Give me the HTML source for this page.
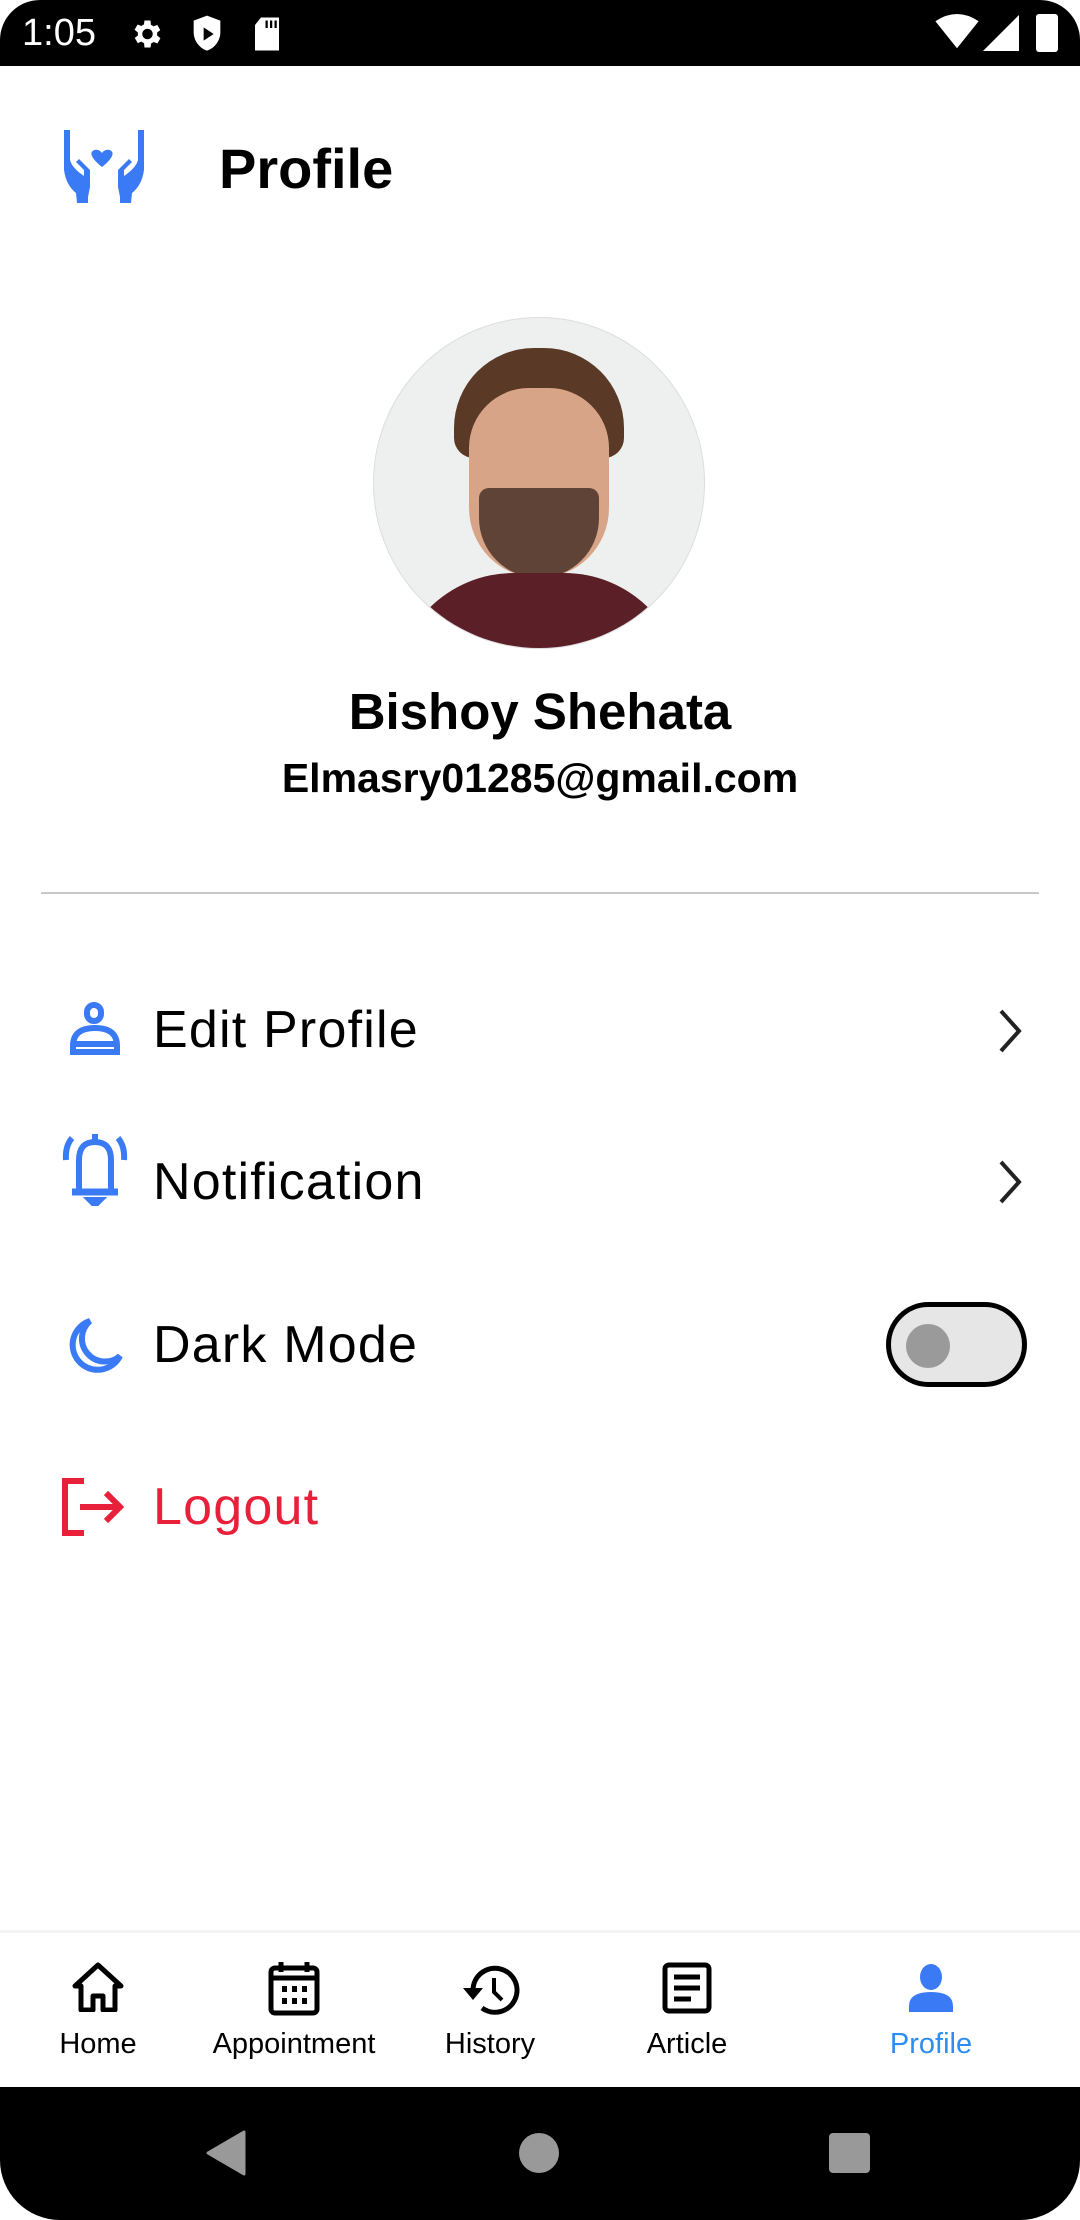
<!DOCTYPE html>
<html><head><meta charset="utf-8"><style>
*{margin:0;padding:0;box-sizing:border-box}
body{width:1080px;height:2220px;background:#fff;font-family:"Liberation Sans",Roboto,sans-serif;position:relative;overflow:hidden;color:#000}
.abs{position:absolute}
.item{position:absolute;left:153px;font-size:52px;line-height:60px;letter-spacing:1.2px}
.nl{position:absolute;top:2028px;font-size:29px;width:200px;text-align:center}
</style></head><body>
<div class="abs" style="left:0;top:0;width:1080px;height:66px;background:#000;border-radius:40px 40px 0 0"></div>
<div class="abs" style="left:22px;top:10px;color:#fff;font-size:38px;line-height:46px">1:05</div>
<svg class="abs" style="left:128px;top:16px" width="36" height="36" viewBox="0 0 24 24"><path fill="#fff" d="M19.4 13a7.5 7.5 0 000-2l2.1-1.6-2-3.5-2.5 1a7 7 0 00-1.7-1L15 3h-4l-.4 2.7a7 7 0 00-1.7 1l-2.5-1-2 3.5L6.6 11a7.5 7.5 0 000 2l-2.1 1.6 2 3.5 2.5-1a7 7 0 001.7 1L11 21h4l.4-2.7a7 7 0 001.7-1l2.5 1 2-3.5zM13 15.5a3.5 3.5 0 110-7 3.5 3.5 0 010 7z"/></svg>
<svg class="abs" style="left:190px;top:14px" width="34" height="40" viewBox="0 0 20 24"><path fill="#fff" d="M10 1L2 4v7c0 5 3.5 9.5 8 11 4.5-1.5 8-6 8-11V4z"/><path fill="#000" d="M8 8v8l6-4z"/></svg>
<svg class="abs" style="left:252px;top:16px" width="30" height="36" viewBox="0 0 20 24"><path fill="#fff" d="M6 1h12v22H2V6z"/><path fill="#000" d="M9 3h1.5v5H9zM12 3h1.5v5H12zM15 3h1.5v5H15z"/></svg>
<svg class="abs" style="left:935px;top:14px" width="44" height="36" viewBox="0 0 24 20"><path fill="#fff" d="M0 4Q12-4 24 4L12 19z"/></svg>
<svg class="abs" style="left:983px;top:14px" width="36" height="38" viewBox="0 0 20 20"><path fill="#fff" d="M20 0v20H0z"/></svg>
<div class="abs" style="left:1036px;top:14px;width:22px;height:38px;background:#fff;border-radius:3px"></div>

<svg class="abs" style="left:62px;top:130px" width="84" height="84" viewBox="0 0 84 84"><g fill="#3a7bf5"><path d="M30 26c-3-6 6-9 10-3 4-6 13-3 10 3-2 5-10 11-10 11s-8-6-10-11z"/><path d="M4 0h4v30q2 8 14 16V40l-8-8 3-3 11 11v17l-2 10v6H15l-1-10Q4 55 2 40V0z"/><path d="M80 0h-4v30q-2 8-14 16V40l8-8-3-3-11 11v17l2 10v6h11l1-10q10-8 12-23V0z"/></g></svg>
<div class="abs" style="left:219px;top:136px;font-size:56px;font-weight:bold">Profile</div>

<div class="abs" style="left:373px;top:317px;width:332px;height:332px;border-radius:50%;background:#eef0f0;overflow:hidden;border:1px solid #ddd">
<div class="abs" style="left:80px;top:30px;width:170px;height:110px;background:#5a3a26;border-radius:80px 80px 20px 20px"></div>
<div class="abs" style="left:95px;top:70px;width:140px;height:190px;background:#d8a487;border-radius:60px 60px 70px 70px"></div>
<div class="abs" style="left:105px;top:170px;width:120px;height:90px;background:#4a3328;border-radius:10px 10px 60px 60px;opacity:.85"></div>
<div class="abs" style="left:20px;top:255px;width:290px;height:120px;background:#5a1f27;border-radius:120px 120px 0 0"></div>
</div>
<div class="abs" style="left:0;top:682px;width:1080px;text-align:center;font-size:51px;font-weight:bold">Bishoy Shehata</div>
<div class="abs" style="left:0;top:755px;width:1080px;text-align:center;font-size:41px;font-weight:bold">Elmasry01285@gmail.com</div>
<div class="abs" style="left:41px;top:892px;width:998px;height:2px;background:#c8c8c8"></div>

<svg class="abs" style="left:68px;top:1002px" width="54" height="54" viewBox="0 0 54 54" fill="none" stroke="#3a7bf5" stroke-width="6"><rect x="19" y="3" width="14" height="16" rx="7"/><path d="M5 50V44Q5 26 27 26Q49 26 49 44V50z"/><path d="M5 42h44"/></svg>
<div class="item" style="top:1000px">Edit Profile</div>
<svg class="abs" style="left:996px;top:1008px" width="30" height="46" viewBox="0 0 30 46"><path d="M5 3l18 20-18 20" fill="none" stroke="#222" stroke-width="4"/></svg>

<svg class="abs" style="left:62px;top:1130px" width="66" height="76" viewBox="0 0 66 76" fill="none" stroke="#3a7bf5" stroke-width="6"><path d="M17 60V30q0-18 16-18t16 18v30"/><path d="M10 62h46" stroke-width="7"/><path d="M33 4v6"/><path d="M10 8q-7 8-6 22M56 8q7 8 6 22"/><path d="M28 70h10l-5 5z" fill="#3a7bf5"/></svg>
<div class="item" style="top:1152px">Notification</div>
<svg class="abs" style="left:996px;top:1159px" width="30" height="46" viewBox="0 0 30 46"><path d="M5 3l18 20-18 20" fill="none" stroke="#222" stroke-width="4"/></svg>

<svg class="abs" style="left:66px;top:1318px" width="62" height="56" viewBox="0 0 62 56"><path d="M24 3A25 25 0 1054 38 22 22 0 0124 3z" fill="none" stroke="#3a7bf5" stroke-width="6"/></svg>
<div class="item" style="top:1315px">Dark Mode</div>
<div class="abs" style="left:886px;top:1302px;width:141px;height:85px;border:5px solid #000;border-radius:43px;background:#e6e6e6"></div>
<div class="abs" style="left:906px;top:1324px;width:44px;height:44px;border-radius:50%;background:#9a9a9a"></div>

<svg class="abs" style="left:62px;top:1478px" width="66" height="58" viewBox="0 0 66 58" fill="none" stroke="#e8203a" stroke-width="6"><path d="M22 3H3v52h19"/><path d="M18 29h40M44 15l14 14-14 14"/></svg>
<div class="item" style="top:1477px;color:#e8203a">Logout</div>

<div class="abs" style="left:0;top:1930px;width:1080px;height:3px;background:#f2f2f2"></div>
<svg class="abs" style="left:72px;top:1962px" width="52" height="50" viewBox="0 0 52 50"><path d="M26 3L3 24h6v24h12V34h10v14h12V24h6z" fill="none" stroke="#000" stroke-width="5" stroke-linejoin="round"/></svg>
<div class="nl" style="left:-2px">Home</div>
<svg class="abs" style="left:268px;top:1960px" width="52" height="56" viewBox="0 0 52 56"><rect x="3" y="8" width="46" height="45" rx="4" fill="none" stroke="#000" stroke-width="5"/><path d="M13 2v10M39 2v10M3 18h46" stroke="#000" stroke-width="5"/><g fill="#000"><rect x="14" y="26" width="5" height="6"/><rect x="24" y="26" width="5" height="6"/><rect x="34" y="26" width="5" height="6"/><rect x="14" y="38" width="5" height="6"/><rect x="24" y="38" width="5" height="6"/><rect x="34" y="38" width="5" height="6"/></g></svg>
<div class="nl" style="left:194px">Appointment</div>
<svg class="abs" style="left:460px;top:1962px" width="60" height="56" viewBox="0 0 60 56"><path d="M13 28A22 22 0 1 1 22 46" fill="none" stroke="#000" stroke-width="5"/><path d="M3 26h20L13 38z" fill="#000"/><path d="M34 16v14l8 8" fill="none" stroke="#000" stroke-width="4"/></svg>
<div class="nl" style="left:390px">History</div>
<svg class="abs" style="left:662px;top:1962px" width="50" height="52" viewBox="0 0 50 52"><rect x="3" y="3" width="44" height="46" rx="4" fill="none" stroke="#000" stroke-width="5"/><path d="M12 15h26M12 26h26M12 37h17" stroke="#000" stroke-width="5"/></svg>
<div class="nl" style="left:587px">Article</div>
<svg class="abs" style="left:908px;top:1964px" width="46" height="48" viewBox="0 0 46 48"><ellipse cx="23" cy="13" rx="11" ry="13" fill="#3a7bf5"/><path d="M1 48V42Q1 28 23 28Q45 28 45 42V48z" fill="#3a7bf5"/></svg>
<div class="nl" style="left:831px;color:#2f8cf0">Profile</div>

<div class="abs" style="left:0;top:2087px;width:1080px;height:133px;background:#000;border-radius:0 0 60px 60px"></div>
<svg class="abs" style="left:204px;top:2130px" width="42" height="46" viewBox="0 0 42 46"><path d="M40 2v42L4 23z" fill="#999" stroke="#999" stroke-width="3" stroke-linejoin="round"/></svg>
<div class="abs" style="left:519px;top:2133px;width:40px;height:40px;border-radius:50%;background:#999"></div>
<div class="abs" style="left:829px;top:2133px;width:41px;height:40px;border-radius:4px;background:#999"></div>
</body></html>
